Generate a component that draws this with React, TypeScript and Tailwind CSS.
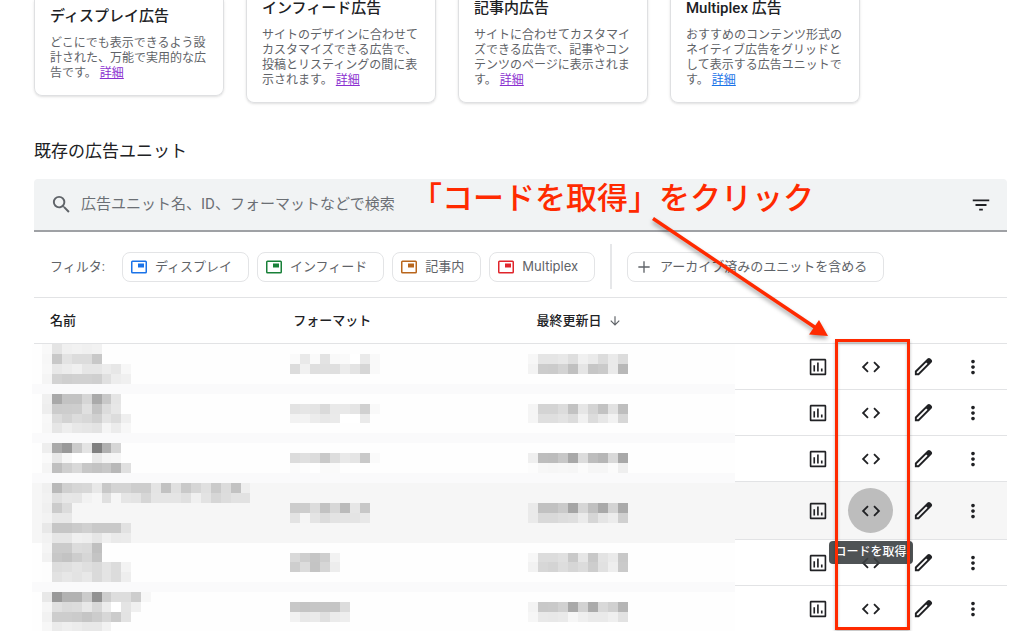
import React from "react";

const TILE = 10;

type Run = [row: number, col: number, shades: string];

const runs: Run[] = [
  [0, 1, "f9 e4 f0 f2 f0 f2"],
  [1, 1, "f7 c8 e3 dc dc c8"],
  [2, 1, "f8 e8 ec f0 e6 e6 ec e7 f7"],
  [3, 1, "f5 d3 cf d1 d1 cf e0 ed f0"],
  [5, 1, "f0 a9 c3 c3 d6 aa c8 e5"],
  [6, 1, "ee cc cd ce e0 c4 dc e7"],
  [7, 1, "f8 dc d3 dc d8 d0 e4 dc ef"],
  [8, 1, "f7 e6 ee e8 e6 e3 f5 ec f7"],
  [10, 1, "ee aa 99 cb e4 80 b0 d6"],
  [11, 1, "fa e8 f7 ff ff e9 f4 f6"],
  [12, 1, "f5 bf cf d9 c7 c3 c8 b8 e0"],
  [14, 1, "f0 b9 d0 d6 d8 e8 c8 d4 d4 cd cd e4 c2 e0 c9 d6 e0 ca dc c2 ee"],
  [15, 1, "f2 e0 e7 e6 f2 f6 e0 f6 e6 e4 d6 e5 e5 e5 e0 f0 e3 d6 dd e2 e2"],
  [16, 1, "f0 cb dc"],
  [17, 1, "f3 e8 e8"],
  [18, 1, "e8 c6 c6 cb d0 c9 c9 c9 e2"],
  [19, 1, "f2 e6 e6 f0 ee e6 f0 ea eb"],
  [20, 1, "f5 cb cb dc da c0"],
  [21, 1, "f2 c7 c3 cd d6 c4"],
  [22, 1, "fd dd df e4 df da e4 dc f3"],
  [23, 1, "fd e2 e7 e3 e8 da e4 dc ee"],
  [25, 1, "e8 99 b2 b2 cb 92 cd dd dd cd f7"],
  [26, 1, "f6 e0 da dc e8 d8 ec ff e4 f0"],
  [27, 1, "f2 cd cd cb c5 cc d7 cb e3"],
  [28, 1, "f7 eb ef ec e8 e8 f2"],

  [1, 26, "fa e9 fa e3 f9 fa ff ea f9"],
  [2, 26, "dc f1 df e0 df ec e4 d6 f9"],
  [6, 26, "e3 e6 e4 da e9 e9 e5 d0 f9"],
  [7, 26, "f2 f3 ec e8 ea ff ff ea"],
  [11, 26, "dc e0 dc c9 dd e9 e5 c9 fa"],
  [12, 26, "fb fd ff fa fa"],
  [16, 26, "cc cd dc c2 d7 bb e6 c7"],
  [17, 26, "e3 f5 e4 dc e3 e4 e4 e8"],
  [21, 26, "d9 ce c5 ce f2"],
  [22, 26, "ce dc c4 d6 ed"],
  [26, 26, "c8 c4 c6 c6 c5 dc"],
  [27, 26, "f2 e8 ea e0 eb ee"],

  [1, 50, "f7 e5 e5 e8 de f0 ea dc ea dc"],
  [2, 50, "f3 cc cb d3 c0 e5 c6 ca ea b8"],
  [6, 50, "f5 d4 d4 dc c2 e6 d4 c2 e2 be"],
  [7, 50, "f5 df df e3 dc f1 dc e7 f2 d7"],
  [11, 50, "ef bd bc c7 a8 dc bd b6 d9 a8"],
  [12, 50, "fc f7 f6 f7 f6 fb f6 f6 fb ef"],
  [16, 50, "ea c1 c1 ca a5 d6 c0 a9 d3 aa"],
  [17, 50, "ea d9 d9 dd df eb d6 e5 ec d0"],
  [21, 50, "f7 dc dc e0 c9 e6 c8 e3 ea c8"],
  [22, 50, "f2 d7 d4 dd d6 dc cd e1 ee ca"],
  [26, 50, "f3 c8 c9 d1 a9 d2 ab d9 d0 b5"],
  [27, 50, "f6 e9 e8 ea f6 ef ea ea ef e2"],
];

const bands = [4, 9, 13, 24];

/* Pixelated cover that hides the account's private values. */
function Mosaic() {
  return (
    <svg
      aria-hidden="true"
      className="pointer-events-none absolute -left-0.5 top-[47px] h-[288px] w-[703px]"
      viewBox="0 0 708 290"
      preserveAspectRatio="none"
      shapeRendering="crispEdges"
    >
      <rect width="708" height="290" fill="#fefefe" />
      <rect y={14 * TILE} width="708" height={6 * TILE} fill="#f6f6f6" />
      {bands.map((row) => (
        <rect key={row} y={row * TILE} width="708" height={TILE} fill="#fafafb" />
      ))}
      {runs.flatMap(([row, col, shades]) =>
        shades.split(" ").map((s, i) => (
          <rect
            key={`${row}-${col + i}`}
            x={(col + i) * TILE}
            y={row * TILE}
            width={TILE}
            height={TILE}
            fill={`#${s}${s}${s}`}
          />
        )),
      )}
    </svg>
  );
}

function Icon({ d, className }: { d: string; className: string }) {
  return (
    <svg aria-hidden="true" viewBox="0 0 24 24" fill="currentColor" className={className}>
      <path d={d} />
    </svg>
  );
}

const paths = {
  search:
    "M15.5 14h-.79l-.28-.27A6.471 6.471 0 0 0 16 9.5 6.5 6.5 0 1 0 9.5 16c1.61 0 3.09-.59 4.23-1.57l.27.28v.79l5 4.99L20.49 19l-4.99-5zm-6 0C7.01 14 5 11.99 5 9.5S7.01 5 9.5 5 14 7.01 14 9.5 11.99 14 9.5 14z",
  filter: "M10 18h4v-2h-4v2zM3 6v2h18V6H3zm3 7h12v-2H6v2z",
  chart:
    "M19.500 3H4.500C3.670 3 3 3.670 3 4.500v15c0 .83.67 1.500 1.500 1.500h15c.83 0 1.500-.67 1.500-1.500v-15c0-.83-.67-1.500-1.500-1.500zM19.200 19.200H4.800V4.800h14.400v14.400zM7 10h1.800v7H7zM11 7h1.800v10H11zM15.200 13.500H17V17h-1.800z",
  code: "M9.4 16.6L4.8 12l4.6-4.6L8 6l-6 6 6 6 1.4-1.4zm5.2 0l4.6-4.6-4.6-4.6L16 6l6 6-6 6-1.4-1.4z",
  edit: "M20.41 4.94l-1.35-1.35c-.78-.78-2.05-.78-2.83 0L3 16.82V21h4.18L20.41 7.77c.79-.78.79-2.05 0-2.83zm-14 14.12L5 19v-1.36l9.82-9.82 1.41 1.41-9.82 9.83z",
  more: "M12 8c1.1 0 2-.9 2-2s-.9-2-2-2-2 .9-2 2 .9 2 2 2zm0 2c-1.1 0-2 .9-2 2s.9 2 2 2 2-.9 2-2-.9-2-2-2zm0 6c-1.1 0-2 .9-2 2s.9 2 2 2 2-.9 2-2-.9-2-2-2z",
  down: "M20 12l-1.41-1.41L13 16.17V4h-2v12.17l-5.58-5.59L4 12l8 8 8-8z",
  plus: "M20.5 13H13v7.5h-2V13H3.5v-2H11V3.500h2V11h7.500z",
};

const cards = [
  {
    title: "ディスプレイ広告",
    body: "どこにでも表示できるよう設計された、万能で実用的な広告です。",
    link: "text-[#8a2fd0]",
  },
  {
    title: "インフィード広告",
    body: "サイトのデザインに合わせてカスタマイズできる広告で、投稿とリスティングの間に表示されます。",
    link: "text-[#8a2fd0]",
  },
  {
    title: "記事内広告",
    body: "サイトに合わせてカスタマイズできる広告で、記事やコンテンツのページに表示されます。",
    link: "text-[#8a2fd0]",
  },
  {
    title: "Multiplex 広告",
    body: "おすすめのコンテンツ形式のネイティブ広告をグリッドとして表示する広告ユニットです。",
    link: "text-[#1a73e8]",
  },
];

const filters = [
  { label: "ディスプレイ", color: "text-[#1a73e8]" },
  { label: "インフィード", color: "text-[#188038]" },
  { label: "記事内", color: "text-[#b9661c]" },
  { label: "Multiplex", color: "text-[#e0242b]" },
];

const chip =
  "flex h-[30px] items-center gap-2 rounded-lg border border-[#e3e4e6] bg-white pl-2 pr-4 font-['Inter','Noto_Sans_CJK_JP',sans-serif] text-[13px] text-[#5f6368]";

const rows = [
  { height: "h-[46px]", active: false },
  { height: "h-[46px]", active: false },
  { height: "h-[46px]", active: false },
  { height: "h-[58px]", active: true },
  { height: "h-[46px]", active: false },
  { height: "h-[46px]", active: false },
];

function Actions({ active }: { active: boolean }) {
  return (
    <div className="flex items-center text-[#202124]">
      <button type="button" aria-label="レポート" className="flex w-[53px] justify-center">
        <Icon d={paths.chart} className="size-[22px]" />
      </button>
      <div className="relative flex w-[53px] justify-center">
        <button
          type="button"
          aria-label="コードを取得"
          className={
            active
              ? "-my-2 flex size-[45px] shrink-0 items-center justify-center rounded-full bg-[#bdbdbd]"
              : "flex items-center justify-center"
          }
        >
          <Icon d={paths.code} className="size-[22px]" />
        </button>
        {active && (
          <div
            role="tooltip"
            className="absolute left-1/2 top-full z-10 mt-4 -translate-x-1/2 whitespace-nowrap rounded-sm bg-[#3c4043]/90 px-1.5 text-xs font-medium leading-[23px] text-white"
          >
            コードを取得
          </div>
        )}
      </div>
      <button type="button" aria-label="編集" className="flex w-[53px] justify-center">
        <Icon d={paths.edit} className="size-[23px]" />
      </button>
      <button type="button" aria-label="その他" className="flex w-[45px] justify-center">
        <Icon d={paths.more} className="size-[22px]" />
      </button>
    </div>
  );
}

export default function App() {
  return (
    <div className="h-screen overflow-hidden bg-white font-['Roboto','Noto_Sans_CJK_JP',sans-serif] text-[#202124]">
      <main className="relative pl-[34px] pr-[17px]">
        <section className="flex h-[104px] items-start gap-[22px]">
          {cards.map((c, i) => (
            <article
              key={c.title}
              className={
                i === 0
                  ? "w-[190px] rounded-b-lg border border-t-0 border-[#dfe0e2] px-[15px] pb-3.5 pt-[5px] shadow-sm"
                  : "-mt-[3px] w-[190px] rounded-b-lg border border-t-0 border-[#dfe0e2] px-[15px] pb-3.5 shadow-sm"
              }
            >
              <h3 className="text-[15px] font-medium leading-[22px]">{c.title}</h3>
              <p className="mt-[9px] text-xs leading-[15px] text-[#5f6368]">
                {c.body}{" "}
                <a href="#more" className={`${c.link} inline-block underline`}>
                  詳細
                </a>
              </p>
            </article>
          ))}
        </section>

        <h2 className="mt-[34px] text-[17px] leading-[26px]">既存の広告ユニット</h2>

        <div className="mt-[15px] flex h-[53px] items-center rounded-t border-b-2 border-[#9fa1a5] bg-[#f1f3f4] pl-4 pr-[15px]">
          <Icon d={paths.search} className="size-[23px] shrink-0 text-[#5f6368]" />
          <input
            type="search"
            aria-label="広告ユニットを検索"
            placeholder="広告ユニット名、ID、フォーマットなどで検索"
            className="ml-2 min-w-0 flex-1 bg-transparent text-[15px] outline-none placeholder:text-[#6b6f74]"
          />
          <button type="button" aria-label="フィルタ">
            <Icon d={paths.filter} className="size-[22px] text-[#202124]" />
          </button>
        </div>

        <div className="flex h-[65px] items-center gap-2 pl-4 pt-1">
          <span className="mr-[9px] text-[13px] text-[#5f6368]">フィルタ:</span>
          {filters.map((f) => (
            <button key={f.label} type="button" className={chip}>
              <svg aria-hidden="true" viewBox="0 0 16 14" className={`h-3.5 w-4 ${f.color}`}>
                <rect x="0.75" y="1.250" width="14.500" height="11.500" rx="0.800" fill="none" stroke="currentColor" strokeWidth="1.500" />
                <rect x="7" y="3.500" width="6" height="4" fill="currentColor" />
              </svg>
              {f.label}
            </button>
          ))}
          <div className="mx-[7px] h-[45px] border-l-2 border-[#e6e7e9]" />
          <button type="button" className={chip}>
            <Icon d={paths.plus} className="size-4" />
            アーカイブ済みのユニットを含める
          </button>
        </div>

        <div className="relative">
          <table className="w-full table-fixed border-collapse text-left text-[13px]">
            <colgroup>
              <col className="w-[25%]" />
              <col className="w-[25%]" />
              <col />
              <col className="w-[216px]" />
            </colgroup>
            <thead>
              <tr className="h-[46px] border-y border-[#e2e3e5]">
                <th className="pl-4 font-medium">名前</th>
                <th className="pl-4 font-medium">フォーマット</th>
                <th className="pl-4 font-medium">
                  <span className="flex items-center gap-1.5">
                    最終更新日
                    <Icon d={paths.down} className="size-3.5 text-[#5f6368]" />
                  </span>
                </th>
                <th aria-label="操作" />
              </tr>
            </thead>
            <tbody>
              {rows.map((r, i) => (
                <tr
                  key={i}
                  className={`${r.height} border-b border-[#e2e3e5] ${r.active ? "bg-[#f6f6f6]" : ""}`}
                >
                  <td />
                  <td />
                  <td />
                  <td className="p-0">
                    <Actions active={r.active} />
                  </td>
                </tr>
              ))}
            </tbody>
          </table>
          <Mosaic />
        </div>

        <p className="absolute left-[411px] top-[176px] whitespace-nowrap text-[31px] font-medium leading-[46px] text-[#ff2a00]">
          「コードを取得」をクリック
        </p>
        <svg
          aria-hidden="true"
          viewBox="0 0 190 130"
          className="pointer-events-none absolute left-[648px] top-[213px] h-[130px] w-[190px] drop-shadow-[0_3px_2px_rgba(0,0,0,0.35)]"
        >
          <path d="M5 5.500L168 115" stroke="#ff2a00" strokeWidth="3.500" />
          <path d="M180 123L171 107L161 121.500Z" fill="#ff2a00" />
        </svg>
        <div className="pointer-events-none absolute left-[835px] top-[339px] z-20 h-[291px] w-[75px] border-3 border-[#ff2a00] shadow-[0_2px_3px_rgba(0,0,0,0.25),inset_0_2px_3px_rgba(0,0,0,0.25)]" />
      </main>
    </div>
  );
}
